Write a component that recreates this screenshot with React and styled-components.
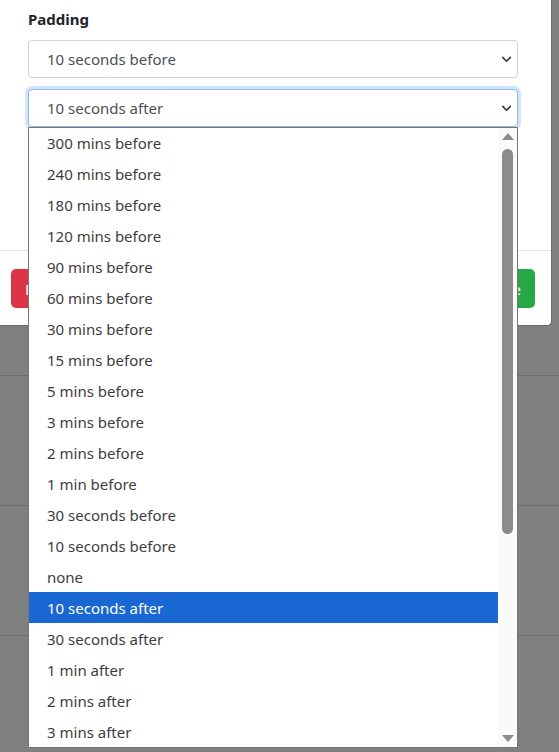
import React from "react";
import styled, { createGlobalStyle, css } from "styled-components";

const options = [
  "300 mins before",
  "240 mins before",
  "180 mins before",
  "120 mins before",
  "90 mins before",
  "60 mins before",
  "30 mins before",
  "15 mins before",
  "5 mins before",
  "3 mins before",
  "2 mins before",
  "1 min before",
  "30 seconds before",
  "10 seconds before",
  "none",
  "10 seconds after",
  "30 seconds after",
  "1 min after",
  "2 mins after",
  "3 mins after",
];

const selected = "10 seconds after";

function Chevron() {
  return (
    <ChevronIcon viewBox="0 0 16 16">
      <path d="M2.5 5l5.5 5.5 5.5-5.5" fill="none" stroke="#343a40" strokeWidth="2.4" strokeLinecap="round" strokeLinejoin="round" />
    </ChevronIcon>
  );
}

function App() {
  return (
    <>
      <GlobalStyle />
      <Page>
        <Modal>
          <Body>
            <Label>Padding</Label>
            <Select>
              10 seconds before
              <Chevron />
            </Select>
            <SelectWrap>
              <Select $focused>
                10 seconds after
                <Chevron />
              </Select>
              <DropList>
                <Options>
                  {options.map((o) => (
                    <Option key={o} $active={o === selected}>
                      {o}
                    </Option>
                  ))}
                </Options>
                <ScrollTrack>
                  <Arrow $dir="up" />
                  <Thumb />
                  <Spacer />
                  <Arrow $dir="down" />
                </ScrollTrack>
              </DropList>
            </SelectWrap>
          </Body>
          <Footer>
            <Button $variant="danger">Delete</Button>
            <Button $variant="success">Save</Button>
          </Footer>
        </Modal>
        <Rows>
          <Row />
          <Row />
          <Row />
        </Rows>
      </Page>
    </>
  );
}

////////////////////////////////////////////Styled-Components
const GlobalStyle = createGlobalStyle`
  html, body {
    margin: 0;
    padding: 0;
    height: 100%;
    overflow: hidden;
  }
  body {
    font-family: "Noto Sans", "Open Sans", sans-serif;
    background: #7f7f7f;
  }
`;

const Page = styled.div`
  min-height: 100vh;
  background: #7f7f7f;
`;

const Modal = styled.div`
  width: 552px;
  background: #fff;
  border-right: 1px solid #6a6a6a;
  border-bottom: 1px solid #6a6a6a;
  border-radius: 0 0 5px 0;
  box-sizing: border-box;
`;

const Body = styled.div`
  padding: 8px 33px 123px 28px;
`;

const Label = styled.div`
  font-weight: bold;
  font-size: 15px;
  line-height: 22px;
  color: #212529;
  margin-bottom: 10px;
`;

const Select = styled.div`
  position: relative;
  box-sizing: border-box;
  height: 38px;
  display: flex;
  align-items: center;
  justify-content: space-between;
  padding: 0 5px 0 18px;
  font-size: 15px;
  color: #495057;
  border: 1px solid #ced4da;
  border-radius: 4px;
  background: #fff;

  ${(p) =>
    p.$focused &&
    css`
      border-color: #8fb8e6;
      box-shadow: 0 0 0 3px rgba(0, 110, 230, 0.18);
    `}
`;

const ChevronIcon = styled.svg`
  width: 11px;
  height: 11px;
`;

const SelectWrap = styled.div`
  position: relative;
  margin-top: 11px;
`;

const DropList = styled.div`
  position: absolute;
  top: 100%;
  left: 0;
  right: 0;
  height: 621px;
  box-sizing: border-box;
  border: 1px solid #767676;
  background: #fff;
  display: flex;
  z-index: 10;
`;

const Options = styled.div`
  flex: 1;
  display: flex;
  flex-direction: column;
`;

const Option = styled.div`
  height: 31px;
  display: flex;
  align-items: center;
  padding-left: 18px;
  font-size: 15px;
  color: ${(p) => (p.$active ? "#fff" : "#3d3d3d")};
  background: ${(p) => (p.$active ? "#1967d2" : "transparent")};
`;

const ScrollTrack = styled.div`
  width: 19px;
  background: #fafafa;
  display: flex;
  flex-direction: column;
  align-items: center;
`;

const Arrow = styled.div`
  height: 17px;
  width: 100%;
  display: flex;
  align-items: center;
  justify-content: center;

  &::before {
    content: "";
    width: 0;
    height: 0;
    border-left: 6px solid transparent;
    border-right: 6px solid transparent;
    ${(p) =>
      p.$dir === "up"
        ? css`
            border-bottom: 7px solid #8b8b8b;
          `
        : css`
            border-top: 7px solid #8b8b8b;
          `}
  }
`;

const Thumb = styled.div`
  width: 11px;
  height: 385px;
  margin-top: 4px;
  border-radius: 6px;
  background: #8b8b8b;
`;

const Spacer = styled.div`
  flex: 1;
`;

const Footer = styled.div`
  display: flex;
  justify-content: space-between;
  border-top: 1px solid #dee2e6;
  padding: 18px 16px 17px 11px;
`;

const Button = styled.button`
  height: 39px;
  padding: 0 14px;
  border: none;
  border-radius: 5px;
  font-family: inherit;
  font-size: 15px;
  color: #fff;
  background: ${(p) => (p.$variant === "danger" ? "#dc3545" : "#28a745")};
`;

const Rows = styled.div`
  padding-top: 49px;
`;

const Row = styled.div`
  height: 129px;
  border-top: 1px solid #6c6c6c;
`;

export default App;
